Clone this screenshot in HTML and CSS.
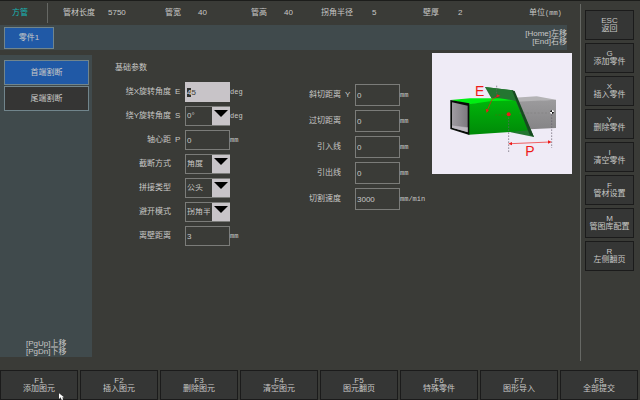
FILE: index.html
```html
<!DOCTYPE html>
<html lang="zh-CN">
<head>
<meta charset="utf-8">
<title>方管</title>
<link rel="stylesheet" href="styles.css">
</head>
<body>
<div class="screen">
  <div class="upper">
    <main class="main">
      <header class="specs">
        <h1 class="kind">方管</h1>
        <div class="spec"><span>管材长度</span><span>5750</span></div>
        <div class="spec wide"><span>管宽</span><span>40</span></div>
        <div class="spec wide"><span>管高</span><span>40</span></div>
        <div class="spec wider"><span>拐角半径</span><span>5</span></div>
        <div class="spec wider"><span>壁厚</span><span>2</span></div>
        <div class="measure">单位<span class="unit">(mm)</span></div>
      </header>
      <nav class="parts">
        <button class="part" type="button">零件1</button>
        <p class="hint">[Home]左移<br>[End]右移</p>
      </nav>
      <div class="work">
        <aside class="side">
          <div class="steps">
            <button class="step active" type="button">首端割断</button>
            <button class="step" type="button">尾端割断</button>
          </div>
          <p class="side-hint">[PgUp]上移<br>[PgDn]下移</p>
        </aside>
        <section class="params">
          <div class="primary">
            <h2 class="title">基础参数</h2>
            <form class="fields">
              <div class="row"><label for="e">绕X旋转角度</label><span class="key">E</span><input class="field current" id="e" value="45"><span class="unit">deg</span></div>
              <div class="row"><label for="s">绕Y旋转角度</label><span class="key">S</span><span class="drop"><select class="field" id="s"><option>0°</option></select><svg class="arrow" viewBox="0 0 18 18"><path d="M2 3H16L9 10Z"/></svg></span><span class="unit">deg</span></div>
              <div class="row"><label for="p">轴心距</label><span class="key">P</span><input class="field" id="p" value="0"><span class="unit">mm</span></div>
              <div class="row"><label for="cut">截断方式</label><span class="key"></span><span class="drop"><select class="field" id="cut"><option>角度</option></select><svg class="arrow" viewBox="0 0 18 18"><path d="M2 3H16L9 10Z"/></svg></span></div>
              <div class="row"><label for="joint">拼接类型</label><span class="key"></span><span class="drop"><select class="field" id="joint"><option>公头</option></select><svg class="arrow" viewBox="0 0 18 18"><path d="M2 3H16L9 10Z"/></svg></span></div>
              <div class="row"><label for="avoid">避开模式</label><span class="key"></span><span class="drop"><select class="field" id="avoid"><option>拐角半径</option></select><svg class="arrow" viewBox="0 0 18 18"><path d="M2 3H16L9 10Z"/></svg></span></div>
              <div class="row"><label for="wall">离壁距离</label><span class="key"></span><input class="field" id="wall" value="3"><span class="unit">mm</span></div>
            </form>
          </div>
          <form class="fields tall">
            <div class="row"><label for="y">斜切距离</label><span class="key">Y</span><input class="field" id="y" value="0"><span class="unit">mm</span></div>
            <div class="row"><label for="over">过切距离</label><span class="key"></span><input class="field" id="over" value="0"><span class="unit">mm</span></div>
            <div class="row"><label for="in">引入线</label><span class="key"></span><input class="field" id="in" value="0"><span class="unit">mm</span></div>
            <div class="row"><label for="out">引出线</label><span class="key"></span><input class="field" id="out" value="0"><span class="unit">mm</span></div>
            <div class="row"><label for="speed">切割速度</label><span class="key"></span><input class="field" id="speed" value="3000"><span class="unit">mm/min</span></div>
          </form>
        </section>
        <svg class="figure" viewBox="36 158 420 363" role="img" aria-label="E P">
          <defs>
            <linearGradient id="green" x1="0" y1="0" x2="0" y2="1"><stop offset="0" stop-color="#00b50a"/><stop offset="1" stop-color="#008a08"/></linearGradient>
            <linearGradient id="gray" x1="0" y1="0" x2="0" y2="1"><stop offset="0" stop-color="#9c9b9d"/><stop offset="1" stop-color="#858486"/></linearGradient>
            <linearGradient id="hollow" x1="0" y1="0" x2="1" y2="0"><stop offset="0" stop-color="#a09ca2"/><stop offset="1" stop-color="#7d7a7f"/></linearGradient>
          </defs>
          <rect x="36" y="158" width="420" height="363" fill="#efebf6"/>
          <path d="M282 292L350 288L408 298L296 307Z" fill="#b4b3b5"/>
          <path d="M288 304L408 298V383L328 387Z" fill="url(#gray)"/>
          <path d="M195 260L278 270L342 410L272 396Z" fill="#247631"/>
          <path d="M91 299L150 294H276L286 303L146 312Z" fill="#00ef12"/>
          <path d="M146 312L215 302L286 300L325 390L270 395L146 403Z" fill="url(#green)"/>
          <path d="M195 260L278 270L291 303L218 289Z" fill="#247631"/>
          <path d="M276 270L284 272L342 410L329 403Z" fill="#174a20"/>
          <path d="M91 299L148 309V404L91 386Z" fill="#080c08"/>
          <path d="M96 306L143 316V395L96 382Z" fill="url(#hollow)"/>
          <path d="M96 374L143 381V396L96 382Z" fill="#bdb8c0"/>
          <path d="M96 374L143 381" stroke="#777379" fill="none"/>
          <path d="M230 256V279M266 342V458M395 342V443" stroke="#66606e" stroke-width="2" stroke-dasharray="5 4" fill="none"/>
          <path d="M298 338H388" stroke="#6f6e70" stroke-width="1" stroke-dasharray="6 5" fill="none"/>
          <path d="M236 286L216 297L202 330M272 430L390 425" stroke="#ee1a18" stroke-width="2" fill="none"/>
          <path d="M226 344H260" stroke="#a03510" stroke-width="1" stroke-dasharray="5 4"/>
          <path d="M230 282L241 286L230 291ZM197 325L207 329L200 338ZM265 430L276 425V435ZM395 425L384 420V430Z" fill="#ee1a18"/>
          <circle cx="266" cy="342" r="6" fill="#ee1a18"/>
          <circle cx="396" cy="335" r="6" fill="#fff"/>
          <path d="M390 335A6 6 0 0 1 396 329V335ZM402 335A6 6 0 0 1 396 341V335Z" fill="#111"/>
          <text x="165" y="287" class="mark">E</text>
          <text x="316" y="466" class="mark">P</text>
        </svg>
      </div>
    </main>
    <nav class="menu">
      <button type="button">ESC<br>返回</button>
      <button type="button">G<br>添加零件</button>
      <button type="button">X<br>插入零件</button>
      <button type="button">Y<br>删除零件</button>
      <button type="button">I<br>清空零件</button>
      <button type="button">F<br>管材设置</button>
      <button type="button">M<br>管图库配置</button>
      <button type="button">R<br>左侧翻页</button>
    </nav>
  </div>
  <nav class="keys">
    <button type="button">F1<br>添加图元</button>
    <button type="button">F2<br>插入图元</button>
    <button type="button">F3<br>删除图元</button>
    <button type="button">F4<br>清空图元</button>
    <button type="button">F5<br>图元翻页</button>
    <button type="button">F6<br>特殊零件</button>
    <button type="button">F7<br>图形导入</button>
    <button type="button">F8<br>全部提交</button>
  </nav>
  <svg class="pointer" viewBox="0 0 6 8"><path d="M0 0V7L2 5L3 8H5L4 5H6Z"/></svg>
</div>
<script src="script.js"></script>
</body>
</html>
```
FILE: styles.css
```css
* {
  box-sizing: border-box;
  margin: 0;
  padding: 0;
}

body,
button,
input,
select {
  font: 8px/8px "Liberation Sans", "Noto Sans CJK SC", sans-serif;
  color: #c8c8c6;
}

body {
  background: #3a3b37;
}

.screen {
  position: relative;
  display: flex;
  flex-direction: column;
  min-height: 100vh;
  border-top: 1px solid #1c1d1b;
  overflow: hidden;
}

.upper {
  flex: 1;
  display: flex;
}

.main {
  flex: 1;
  display: flex;
  flex-direction: column;
}

.specs {
  display: grid;
  grid-template-columns: 48fr 117fr 86fr 70fr 102fr 106fr 51fr;
  align-items: center;
  height: 24px;
}

.kind {
  display: flex;
  align-items: center;
  height: 20px;
  padding-left: 12px;
  border-right: 1px solid #666864;
  font-size: 8px;
  font-weight: 400;
  color: #18b5b5;
}

.spec {
  display: flex;
  gap: 13px;
  white-space: nowrap;
}

.kind + .spec {
  padding-left: 15px;
}

.wide {
  gap: 17px;
}

.wider {
  gap: 19px;
}

.measure {
  white-space: nowrap;
}

.unit {
  font: 7px/8px "Liberation Mono", monospace;
}

.parts {
  display: flex;
  justify-content: space-between;
  align-items: center;
  height: 25px;
  margin-right: 13px;
  padding-left: 4px;
  background: #404a4c;
}

.part,
.step {
  border: 1px solid #71858c;
  background: #353534;
}

.part {
  width: 50px;
  height: 22px;
}

.part,
.active {
  background: #2059a6;
}

.hint {
  text-align: right;
}

.work {
  flex: 1;
  display: flex;
  align-items: flex-start;
  padding-right: 8px;
}

.side {
  align-self: stretch;
  display: flex;
  flex-direction: column;
  justify-content: space-between;
  width: 92px;
  margin: 5px 0 13px;
  padding: 5px 3px 1px 4px;
  background: #404a4c;
}

.steps {
  display: grid;
  gap: 1px;
}

.step {
  height: 25px;
}

.side-hint {
  padding-left: 22px;
}

.params {
  flex: 1;
  display: flex;
  align-items: flex-start;
  padding-left: 23px;
}

.primary {
  width: 170px;
  padding-top: 14px;
}

.title {
  font-size: 8px;
  font-weight: 400;
}

.fields {
  display: grid;
  gap: 4px;
  padding-top: 10px;
}

.row {
  display: grid;
  grid-template-columns: 56px 14px 45px 1fr;
  align-items: center;
  height: 20px;
  white-space: nowrap;
}

.row label {
  text-align: right;
}

.key {
  padding-left: 4px;
}

.tall {
  padding-top: 34px;
}

.tall .row {
  height: 22px;
}

.field {
  display: block;
  width: 100%;
  height: 20px;
  padding-left: 1px;
  border: 1px solid #7b7c79;
  border-radius: 0;
  outline: 0;
  background: transparent;
  appearance: none;
}

.tall .field {
  height: 22px;
}

.current {
  border-color: #c8c4c8;
  background: #c8c4c8;
  color: #3a3b37;
}

.current::selection {
  background: #30312f;
  color: #e4e4e4;
}

.drop {
  position: relative;
}

.drop .field {
  padding-right: 19px;
}

.arrow {
  position: absolute;
  top: 1px;
  right: 0;
  width: 18px;
  height: 18px;
  background: #c8c4c8;
  pointer-events: none;
}

.figure {
  width: 140px;
  height: 121px;
  margin-top: 3px;
}

.mark {
  font: 42px "Liberation Sans", sans-serif;
  fill: #ee1a18;
}

.menu {
  display: flex;
  flex-direction: column;
  gap: 3px;
  width: 60px;
  margin: 3px 0 9px;
  padding: 6px 6px 0 4px;
  border-left: 1px solid #666864;
}

.menu button,
.keys button {
  height: 30px;
  border: 1px solid #1b1b1b;
  background: #353635;
  white-space: nowrap;
}

.keys {
  display: grid;
  grid-template-columns: repeat(8, 1fr);
  gap: 2px;
  padding-right: 2px;
}

.pointer {
  position: absolute;
  bottom: 0;
  left: 59px;
  width: 5px;
  height: 7px;
  fill: #fff;
}
```
FILE: script.js
```js
const current = document.querySelector(".current");
current.focus();
current.setSelectionRange(0, 1);
```
